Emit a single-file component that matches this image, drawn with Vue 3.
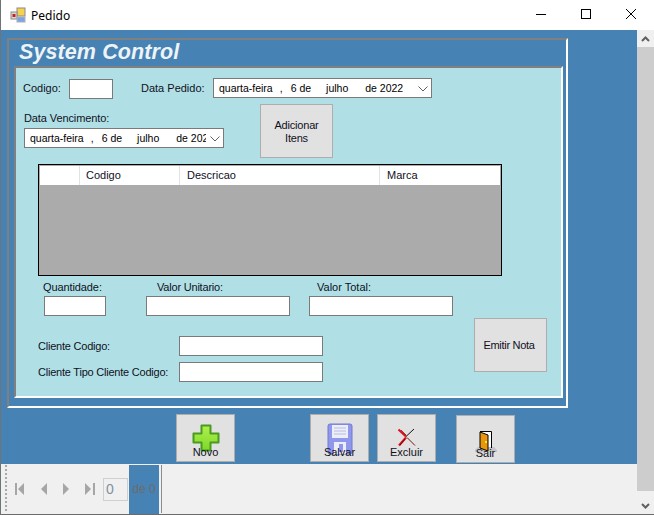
<template>
  <div class="window">
    <div class="titlebar">
      <svg class="app-icon" width="16" height="16" viewBox="0 0 16 16">
        <rect x="7" y="1" width="8" height="8" fill="#f8d24a" stroke="#8a8a8a" />
        <rect x="1" y="5" width="6" height="7" fill="#d8d8d8" stroke="#8a8a8a" />
        <rect x="2.500" y="7" width="3" height="3" fill="#c8201c" />
        <rect x="7" y="10" width="8" height="5" fill="#7aa4e8" stroke="#b0b0b0" />
      </svg>
      <span class="title">Pedido</span>
      <div class="win-buttons">
        <svg width="12" height="12" viewBox="0 0 12 12"><path d="M1 6.500h10" stroke="#000" fill="none" /></svg>
        <svg width="12" height="12" viewBox="0 0 12 12"><rect x="1.500" y="1.500" width="9" height="9" stroke="#000" fill="none" /></svg>
        <svg width="12" height="12" viewBox="0 0 12 12"><path d="M1 1l10 10M11 1L1 11" stroke="#000" fill="none" /></svg>
      </div>
    </div>

    <div class="body">
      <div class="content">
        <div class="client-area">
          <div class="group">
            <div class="brand">System Control</div>
            <div class="panel">
              <div class="row-one">
                <label class="lbl codigo-lbl">Codigo:</label>
                <div class="textbox codigo-box"></div>
                <label class="lbl pedido-lbl">Data Pedido:</label>
                <div class="date pedido-date">
                  <div class="date-text">
                    <span>quarta-feira</span><span class="d-b">,</span><span class="d-c">6 de</span><span class="d-d">julho</span><span class="d-e">de 2022</span>
                  </div>
                  <svg class="chev" width="10" height="6" viewBox="0 0 10 6"><path d="M.5.5L5 5l4.500-4.500" fill="none" stroke="#606060" /></svg>
                </div>
              </div>

              <div class="row-two">
                <div class="venc">
                  <label class="lbl venc-lbl">Data Vencimento:</label>
                  <div class="date venc-date">
                    <div class="date-text">
                      <span>quarta-feira</span><span class="d-b">,</span><span class="d-c">6 de</span><span class="d-d">julho</span><span class="d-e">de 2022</span>
                    </div>
                    <svg class="chev" width="10" height="6" viewBox="0 0 10 6"><path d="M.5.5L5 5l4.500-4.500" fill="none" stroke="#606060" /></svg>
                  </div>
                </div>
                <button class="btn add-btn">Adicionar<br />Itens</button>
              </div>

              <div class="grid">
                <div class="grid-head">
                  <div class="col col-0"></div>
                  <div class="col col-1">Codigo</div>
                  <div class="col col-2">Descricao</div>
                  <div class="col col-3">Marca</div>
                </div>
              </div>

              <div class="totals">
                <div class="total total-q">
                  <label class="lbl">Quantidade:</label>
                  <div class="textbox"></div>
                </div>
                <div class="total total-u">
                  <label class="lbl">Valor Unitario:</label>
                  <div class="textbox"></div>
                </div>
                <div class="total total-t">
                  <label class="lbl">Valor Total:</label>
                  <div class="textbox"></div>
                </div>
              </div>

              <div class="client-row">
                <div class="client-fields">
                  <div class="client-field">
                    <label class="lbl">Cliente Codigo:</label>
                    <div class="textbox"></div>
                  </div>
                  <div class="client-field">
                    <label class="lbl">Cliente Tipo Cliente Codigo:</label>
                    <div class="textbox"></div>
                  </div>
                </div>
                <button class="btn emit-btn">Emitir Nota</button>
              </div>
            </div>
          </div>

          <div class="actions">
            <button class="btn act novo">
              <svg class="act-icon" width="28" height="28" viewBox="0 0 28 28">
                <defs>
                  <linearGradient id="plusFill" x1="0" y1="0" x2="0" y2="1">
                    <stop offset="0" stop-color="#aef04e" />
                    <stop offset="1" stop-color="#7ed82a" />
                  </linearGradient>
                </defs>
                <path d="M9.500 1.500h9v8h8v9h-8v8h-9v-8h-8v-9h8z" fill="url(#plusFill)" stroke="#4a9a20" stroke-width="2" stroke-linejoin="round" />
              </svg>
              <span>Novo</span>
            </button>
            <button class="btn act salvar">
              <svg class="act-icon" width="26" height="32" viewBox="0 0 26 32">
                <rect x="1" y="1" width="24" height="30" rx="2" fill="#8f98ea" stroke="#7078d0" />
                <rect x="5" y="2" width="16" height="13" fill="#eceef8" />
                <path d="M7 5h12M7 8h12M7 11h12" stroke="#b8bce0" />
                <rect x="7" y="19" width="12" height="12" fill="#eceef8" />
                <rect x="12" y="21" width="4" height="8" fill="#8f98ea" />
              </svg>
              <span>Salvar</span>
            </button>
            <button class="btn act excluir">
              <svg class="act-icon" width="20" height="19" viewBox="0 0 20 19">
                <path d="M17 1L9 8.500" stroke="#111" fill="none" />
                <path d="M10 9.500l8 8" stroke="#7a1010" fill="none" />
                <path d="M1.500 1.500L9 8.500" stroke="#e0101c" stroke-width="2.200" fill="none" />
                <path d="M9 9.500L2 17.500" stroke="#d8101c" stroke-width="2.200" fill="none" />
                <path d="M4 2l5 5M8 11l-5 6" stroke="#300" stroke-width=".6" fill="none" />
              </svg>
              <span>Excluir</span>
            </button>
            <button class="btn act sair">
              <svg class="act-icon" width="22" height="21" viewBox="0 0 22 21">
                <path d="M0 19l3-3h16l3 3v2H0z" fill="#c4c4c4" />
                <path d="M5 .5h11.500V17" fill="#fff" stroke="#000" />
                <rect x="6" y="1" width="10" height="15" fill="#fff" />
                <path d="M5 1l8 3v16l-8-3z" fill="#e8960c" stroke="#000" />
                <rect x="10" y="10" width="2" height="2" fill="#f8f020" />
              </svg>
              <span>Sair</span>
            </button>
          </div>
        </div>

        <div class="toolbar">
          <div class="grip"></div>
          <svg class="nav first" width="11" height="12" viewBox="0 0 11 12"><path d="M0 0h2v12H0zM9 0v12L3 6z" fill="#a6a6a6" /></svg>
          <svg class="nav prev" width="6" height="12" viewBox="0 0 6 12"><path d="M6 0v12L0 6z" fill="#a6a6a6" /></svg>
          <svg class="nav next" width="6" height="12" viewBox="0 0 6 12"><path d="M0 0v12l6-6z" fill="#a6a6a6" /></svg>
          <svg class="nav last" width="11" height="12" viewBox="0 0 11 12"><path d="M0 0v12l6-6zM8 0h2v12H8z" fill="#a6a6a6" /></svg>
          <div class="pos-box">0</div>
          <div class="pos-count">de 0</div>
          <div class="tool-sep"></div>
        </div>
      </div>

      <div class="scrollbar">
        <div class="sb-btn sb-up">
          <svg width="9" height="6" viewBox="0 0 9 6"><path d="M1 5l3.500-3.500L8 5" fill="none" stroke="#606060" stroke-width="2" /></svg>
        </div>
        <div class="sb-thumb"></div>
        <div class="sb-btn sb-down">
          <svg width="9" height="6" viewBox="0 0 9 6"><path d="M1 1l3.500 3.500L8 1" fill="none" stroke="#606060" stroke-width="2" /></svg>
        </div>
      </div>
    </div>
  </div>
</template>

<script setup>
</script>

<style>
html,
body {
  margin: 0;
  background: #fff;
}
</style>

<style scoped>
.window {
  width: 654px;
  height: 515px;
  box-sizing: border-box;
  display: flex;
  flex-direction: column;
  overflow: hidden;
  background: #fff;
  border-left: 1px solid #6f7478;
  border-bottom: 1px solid #6b6b6b;
  font-family: "Liberation Sans", Arial, sans-serif;
  font-size: 11px;
  color: #000;
}

.titlebar {
  height: 30px;
  flex: none;
  display: flex;
  align-items: center;
  background: #fff;
}

.app-icon {
  margin-left: 9px;
}

.title {
  margin-left: 5px;
  font-family: "Noto Sans", sans-serif;
  font-size: 12px;
}

.win-buttons {
  margin-left: auto;
  margin-right: 17px;
  display: flex;
  gap: 33px;
  margin-top: -2px;
}

.win-buttons svg {
  display: block;
}

.body {
  flex: 1;
  display: flex;
  min-height: 0;
}

.content {
  width: 636px;
  display: flex;
  flex-direction: column;
}

.client-area {
  height: 434px;
  flex: none;
  background: #4682b4;
  padding: 8px 0 0 6px;
  box-sizing: border-box;
}

.group {
  width: 561px;
  height: 370px;
  box-sizing: border-box;
  border: 2px solid;
  border-color: #808080 #fff #fff #808080;
  padding: 0 3px 0 5px;
}

.brand {
  height: 26px;
  padding-left: 5px;
  line-height: 24px;
  font-size: 21.500px;
  font-weight: bold;
  font-style: italic;
  letter-spacing: 0.1px;
  color: #eef3f6;
}

.panel {
  height: 332px;
  box-sizing: border-box;
  border: 2px solid;
  border-color: #808080 #fff #fff #808080;
  background: #b0e0e6;
}

.lbl {
  display: block;
  white-space: nowrap;
  color: #10101c;
}

.textbox {
  height: 20px;
  box-sizing: border-box;
  border: 1px solid #7a7a7a;
  background: #fff;
}

.date {
  height: 20px;
  box-sizing: border-box;
  border: 1px solid #7a7a7a;
  background: #fff;
  display: flex;
  align-items: center;
  position: relative;
}

.date-text {
  display: flex;
  white-space: nowrap;
  overflow: hidden;
  margin-left: 5px;
  line-height: 18px;
  font-size: 10.500px;
}

.d-b {
  margin-left: 7px;
}

.d-c {
  margin-left: 8px;
}

.d-d {
  margin-left: 15px;
}

.d-e {
  margin-left: 17px;
}

.chev {
  position: absolute;
  right: 3px;
  top: 7px;
}

.row-one {
  display: flex;
  align-items: center;
  padding: 10px 0 0 7px;
  height: 30px;
  box-sizing: border-box;
}

.codigo-lbl {
  width: 46px;
}

.codigo-box {
  width: 44px;
  margin-top: 1px;
}

.pedido-lbl {
  margin-left: 28px;
  width: 72px;
}

.pedido-date {
  width: 219px;
  margin-top: -1px;
}

.row-two {
  display: flex;
  margin-top: 6px;
  padding-left: 8px;
  height: 54px;
}

.venc {
  width: 200px;
  padding-top: 8px;
}

.venc-lbl {
  line-height: 13px;
  height: 16px;
  letter-spacing: -0.1px;
}

.venc-date {
  width: 200px;
}

.venc-date .date-text {
  width: 176px;
}

.btn {
  box-sizing: border-box;
  border: 1px solid #adadad;
  background: #e1e1e1;
  color: #10101c;
  font-family: inherit;
  font-size: 11px;
  line-height: 13px;
  padding: 0;
}

.add-btn {
  width: 73px;
  height: 54px;
  margin-left: 36px;
  padding-top: 2px;
  letter-spacing: -0.2px;
}

.grid {
  width: 464px;
  height: 112px;
  box-sizing: border-box;
  margin: 6px 0 0 22px;
  border: 1px solid #000;
  padding: 1px 0 0 1px;
  background: #ababab;
}

.grid-head {
  display: flex;
  height: 19px;
  margin-right: 1px;
  background: #fff;
}

.col {
  box-sizing: border-box;
  height: 19px;
  line-height: 19px;
  padding-left: 6px;
  border-right: 1px solid #e3e3e3;
  white-space: nowrap;
  color: #10101c;
}

.col-0 {
  width: 40px;
}

.col-1 {
  width: 100px;
}

.col-2 {
  width: 200px;
  padding-left: 7px;
}

.col-3 {
  flex: 1;
  border-right: 0;
  padding-left: 7px;
}

.totals {
  display: flex;
  margin-top: 4px;
}

.total {
  display: flex;
  flex-direction: column;
}

.total .lbl {
  height: 16px;
  line-height: 14px;
}

.total-q {
  width: 62px;
  margin-left: 28px;
}

.total-u {
  width: 144px;
  margin-left: 40px;
}

.total-t {
  width: 144px;
  margin-left: 19px;
}

.total-q .lbl {
  margin-left: -1px;
  letter-spacing: -0.1px;
}

.total-u .lbl {
  margin-left: 11px;
  letter-spacing: -0.2px;
}

.total-t .lbl {
  margin-left: 8px;
}

.client-row {
  display: flex;
  margin-top: 2px;
}

.client-fields {
  display: flex;
  flex-direction: column;
  gap: 6px;
  padding: 18px 0 0 22px;
  width: 307px;
  box-sizing: border-box;
}

.client-field {
  display: flex;
  align-items: center;
}

.client-field .lbl {
  width: 141px;
  letter-spacing: -0.22px;
}

.client-field .textbox {
  width: 144px;
}

.emit-btn {
  width: 73px;
  height: 54px;
  margin-left: 151px;
  padding-right: 3px;
  letter-spacing: -0.3px;
}

.actions {
  position: relative;
  display: flex;
  align-items: flex-start;
  margin: 6px 0 0 169px;
}

.act {
  width: 59px;
  height: 48px;
  position: relative;
  display: flex;
  flex-direction: column;
  align-items: center;
  justify-content: flex-end;
  overflow: hidden;
}

.act span {
  display: block;
  height: 15px;
  line-height: 13px;
  position: relative;
}

.act-icon {
  display: block;
  flex: none;
}

.novo .act-icon {
  margin-bottom: -6px;
  margin-left: 1px;
}

.salvar {
  margin-left: 75px;
}

.salvar .act-icon {
  margin-bottom: -9px;
}

.excluir {
  margin-left: 8px;
}

.excluir .act-icon {
  margin-bottom: -1px;
  margin-left: 1px;
}

.sair {
  margin-left: 20px;
  margin-top: 1px;
}

.sair .act-icon {
  margin-bottom: -5px;
  margin-left: 1px;
}

.toolbar {
  flex: 1;
  display: flex;
  align-items: center;
  background: #f0f0f0;
  position: relative;
}

.grip {
  width: 2px;
  height: 48px;
  margin-left: 4px;
  background: repeating-linear-gradient(to bottom, #a8a8a8 0 2px, transparent 2px 4px);
}

.nav {
  display: block;
}

.first {
  margin-left: 8px;
}

.prev {
  margin-left: 15px;
}

.next {
  margin-left: 16px;
}

.last {
  margin-left: 16px;
}

.pos-box {
  width: 25px;
  height: 23px;
  box-sizing: border-box;
  margin-left: 7px;
  border: 1px solid #cfcfcf;
  padding-left: 2px;
  line-height: 21px;
  font-size: 14px;
  color: #8090a0;
}

.pos-count {
  width: 30px;
  height: 49px;
  margin: 1px 0 0 1px;
  box-sizing: border-box;
  background: #4682b4;
  line-height: 49px;
  text-align: center;
  font-size: 12px;
  color: #6c6c6c;
}

.tool-sep {
  width: 1px;
  height: 48px;
  margin-left: 2px;
  background: #8c8c8c;
}

.scrollbar {
  width: 17px;
  display: flex;
  flex-direction: column;
  background: #f0f0f0;
}

.sb-btn {
  display: flex;
  align-items: center;
  justify-content: center;
  flex: none;
}

.sb-up {
  height: 17px;
}

.sb-down {
  height: 23px;
  padding-top: 6px;
  box-sizing: border-box;
}

.sb-thumb {
  flex: 1;
  background: #cdcdcd;
}
</style>
